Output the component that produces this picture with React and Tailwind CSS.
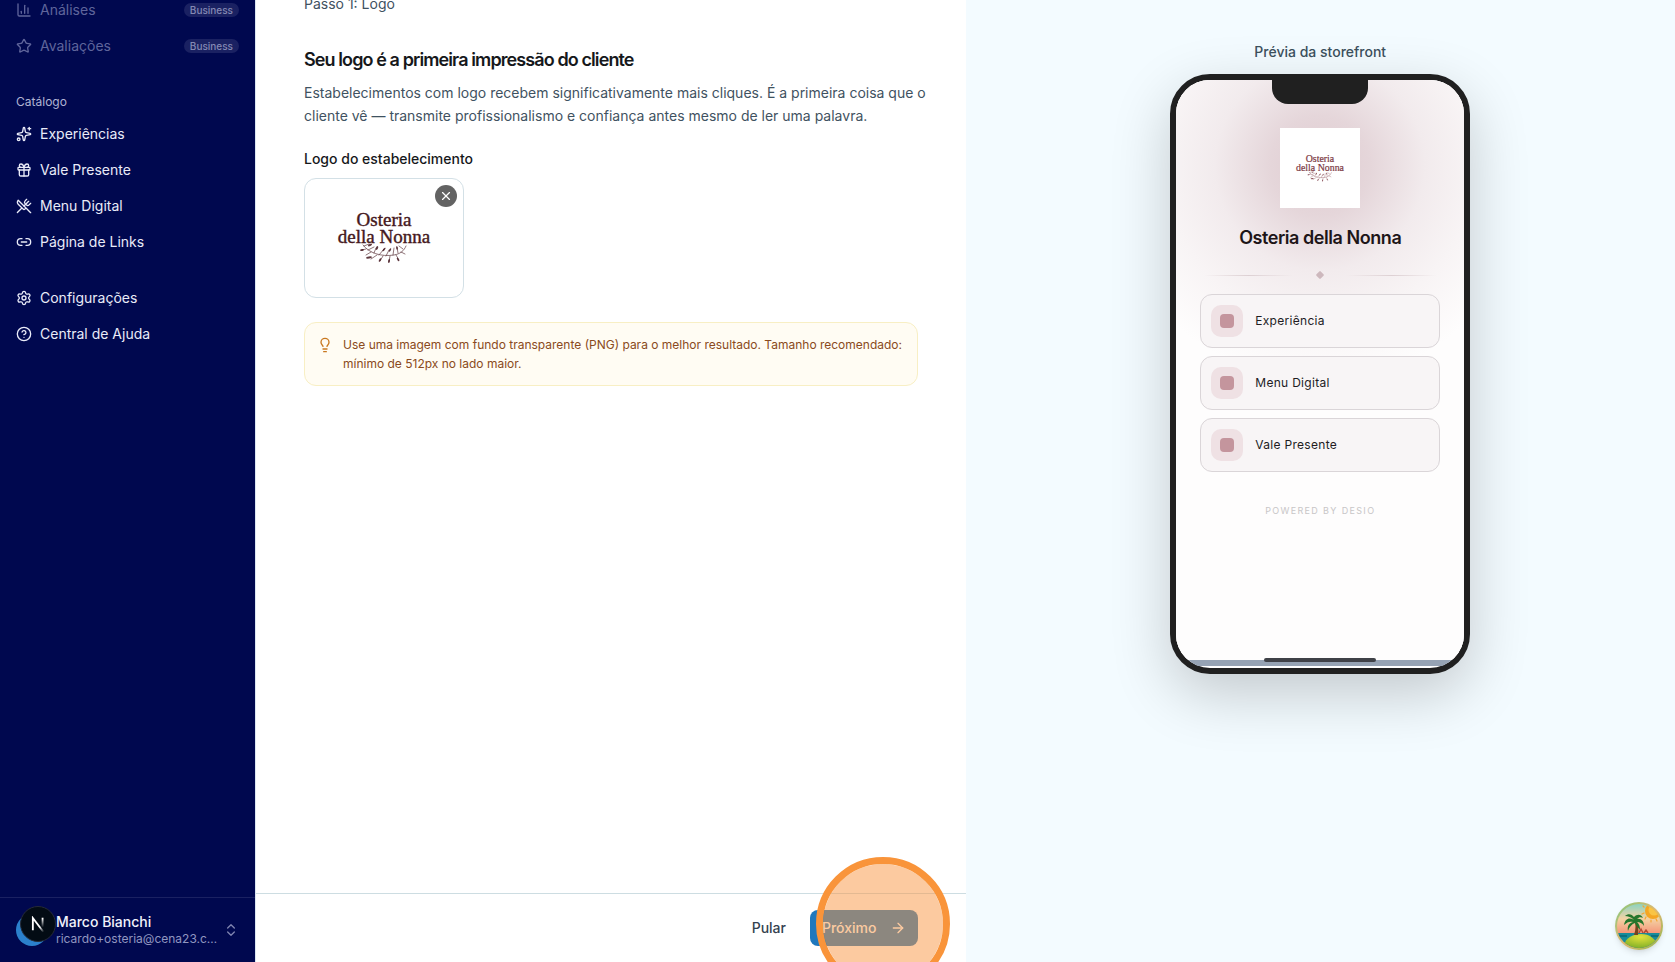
import React from "react";
import {
  ChartColumn,
  Star,
  Sparkles,
  Gift,
  UtensilsCrossed,
  Link2,
  Settings,
  CircleHelp,
  ChevronsUpDown,
  Lightbulb,
  X,
  ArrowRight,
} from "lucide-react";

const businessItems = [
  { label: "Análises", icon: ChartColumn },
  { label: "Avaliações", icon: Star },
];

const catalogItems = [
  { label: "Experiências", icon: Sparkles },
  { label: "Vale Presente", icon: Gift },
  { label: "Menu Digital", icon: UtensilsCrossed },
  { label: "Página de Links", icon: Link2 },
];

const supportItems = [
  { label: "Configurações", icon: Settings },
  { label: "Central de Ajuda", icon: CircleHelp },
];

const previewLinks = ["Experiência", "Menu Digital", "Vale Presente"];

function NavLink({ label, icon: Icon }) {
  return (
    <a href="#" className="flex h-8 items-center gap-2 px-2 text-sm text-[#e9ebf8]">
      <Icon className="size-4 shrink-0" />
      {label}
    </a>
  );
}

function BrandLogo({ className }) {
  return (
    <svg className={className} viewBox="0 0 96 52" role="img" aria-label="Osteria della Nonna">
      <g
        fill="currentColor"
        stroke="currentColor"
        strokeWidth="0.4"
        fontFamily="Liberation Serif, serif"
        fontSize="19"
        textAnchor="middle"
      >
        <text x="48" y="14">Osteria</text>
        <text x="48" y="31">della Nonna</text>
      </g>
      <g fill="none" stroke="currentColor" strokeWidth="0.7" strokeLinecap="round" opacity="0.85">
        <path d="M27 33c6 8 18 12 31 10 6-1 10-4 12-9" />
        <path d="M28 34l5-2M30 37l-4 1M32 38l6-3M35 40l-5 3M38 41l2-5M41 43l-6 4M43 43l5-6M47 44l-3 5M50 44l3-6M54 44l-1 6M57 43l1-7M60 43l3 5M62 41l-1-6M65 40l4 2M67 37l-4-3" />
      </g>
      <g fill="currentColor" opacity="0.85">
        <ellipse cx="34" cy="33" rx="2.2" ry="1" transform="rotate(-25 34 33)" />
        <ellipse cx="26" cy="38" rx="2" ry="0.9" transform="rotate(-10 26 38)" />
        <ellipse cx="33" cy="45.5" rx="3" ry="1.1" transform="rotate(-8 33 45.5)" />
        <ellipse cx="41" cy="36" rx="2" ry="1" transform="rotate(-65 41 36)" />
        <ellipse cx="48" cy="37.5" rx="2.2" ry="0.9" transform="rotate(-50 48 37.5)" />
        <ellipse cx="44" cy="48" rx="2" ry="0.9" transform="rotate(-60 44 48)" />
        <ellipse cx="54" cy="38" rx="2" ry="0.8" transform="rotate(-60 54 38)" />
        <ellipse cx="53" cy="49" rx="2" ry="0.9" transform="rotate(-80 53 49)" />
        <ellipse cx="61" cy="36" rx="1.8" ry="0.8" transform="rotate(80 61 36)" />
        <ellipse cx="62" cy="47.5" rx="2" ry="0.8" transform="rotate(60 62 47.5)" />
      </g>
    </svg>
  );
}

function Sidebar() {
  return (
    <aside className="flex w-64 shrink-0 flex-col border-r border-[#dbe6f2] bg-[#00084f]">
      <nav className="-mt-1.5 flex-1 px-2" aria-label="Principal">
        <div className="flex flex-col gap-1">
          {businessItems.map(({ label, icon: Icon }) => (
            <a
              key={label}
              href="#"
              aria-disabled="true"
              className="flex h-8 items-center gap-2 px-2 text-sm text-[#5f659b]"
            >
              <Icon className="size-4 shrink-0" />
              <span className="flex-1">{label}</span>
              <span className="rounded-full bg-[#1a2162] px-1.5 text-[10px] leading-[14px] font-medium text-[#8489b4]">
                Business
              </span>
            </a>
          ))}
        </div>
        <h2 className="mt-6 flex h-8 items-center px-2 text-xs text-[#b0b4d3]">Catálogo</h2>
        <div className="flex flex-col gap-1">
          {catalogItems.map((item) => (
            <NavLink key={item.label} {...item} />
          ))}
        </div>
        <div className="mt-6 flex flex-col gap-1">
          {supportItems.map((item) => (
            <NavLink key={item.label} {...item} />
          ))}
        </div>
      </nav>
      <div className="border-t border-[#1a2162] p-2">
        <button type="button" className="flex h-12 w-full items-center px-2 text-left">
          <span className="mr-2 size-8 shrink-0 rounded-full bg-[#2b80cc]" />
          <span className="min-w-0 flex-1">
            <span className="block truncate text-sm leading-[18px] font-medium text-[#f1f3fb]">Marco Bianchi</span>
            <span className="block truncate text-xs text-[#9196c0]">ricardo+osteria@cena23.com.br</span>
          </span>
          <ChevronsUpDown className="size-4 shrink-0 text-[#7f84b0]" />
        </button>
      </div>
    </aside>
  );
}

function Editor() {
  return (
    <main className="flex min-w-0 flex-1 flex-col bg-white">
      <div className="-mt-1.5 flex-1 px-12">
        <p className="text-sm text-[#3f5261]">Passo 1: Logo</p>
        <h1 className="mt-8 text-lg font-semibold tracking-tighter text-[#16181b]">
          Seu logo é a primeira impressão do cliente
        </h1>
        <p className="-mr-3 mt-[7px] text-sm leading-[23px] text-[#3f5261]">
          Estabelecimentos com logo recebem significativamente mais cliques. É a primeira coisa que o{" "}
          <br />
          cliente vê — transmite profissionalismo e confiança antes mesmo de ler uma palavra.
        </p>
        <h2 className="mt-[25px] text-sm leading-[14px] font-medium text-[#16181b]">Logo do estabelecimento</h2>
        <div className="relative mt-3 flex h-30 w-40 items-center justify-center rounded-xl border border-[#d3e0e6] bg-white">
          <BrandLogo className="h-[52px] w-24 text-[#451820]" />
          <button
            type="button"
            aria-label="Remover logo"
            className="absolute top-1.5 right-1.5 flex size-[22px] items-center justify-center rounded-full bg-[#636363] text-white"
          >
            <X className="size-3.5" />
          </button>
        </div>
        <div className="mt-6 flex gap-2.5 rounded-xl border border-[#f8efc4] bg-[#fffcf3] p-3 text-[#8a4a20]">
          <Lightbulb className="mt-0.5 size-4 shrink-0 text-[#c9781f]" />
          <p className="text-xs leading-[19px]">
            Use uma imagem com fundo transparente (PNG) para o melhor resultado. Tamanho recomendado: mínimo de 512px
            no lado maior.
          </p>
        </div>
      </div>
      <footer className="flex items-center justify-end gap-3 border-t border-[#cddde2] px-12 py-4">
        <button type="button" className="h-9 px-3 text-sm font-medium text-[#34424f]">
          Pular
        </button>
        <div className="relative">
          <button
            type="button"
            className="flex h-9 items-center gap-[13px] rounded-lg bg-[#1f78bd] px-3 text-sm font-medium text-white"
          >
            Próximo
            <ArrowRight className="size-4" />
          </button>
          <span className="pointer-events-none absolute -top-[53px] left-1.5 z-10 size-[134px] rounded-full border-[7px] border-[#f9943a] bg-[#f99541]/50 bg-clip-padding" />
        </div>
      </footer>
    </main>
  );
}

function PhonePreview() {
  return (
    <div className="relative h-[600px] w-[300px] overflow-hidden rounded-[40px] border-[6px] border-[#202020] bg-white shadow-[0_20px_60px_rgba(0,0,0,0.2)]">
      <div className="h-[580px] bg-[#fefdfd] bg-[radial-gradient(circle_at_50%_86px,#dfcbd0_0px,#e5d6da_50px,#f2ebed_105px,#f8f4f5_155px,#fefdfd_215px)] px-6 pt-12">
        <div className="mx-auto flex size-20 items-center justify-center bg-white">
          <BrandLogo className="h-[27px] w-[50px] text-[#7c3a44]" />
        </div>
        <h2 className="mt-4 text-center text-lg font-semibold tracking-tight text-[#1d1518]">Osteria della Nonna</h2>
        <div className="mt-[19px] flex h-2 items-center gap-6 px-1">
          <span className="h-px flex-1 bg-linear-to-r from-transparent via-[#ddd0d3] to-transparent" />
          <span className="size-1.5 rotate-45 rounded-[1px] bg-[#cdb8bd]" />
          <span className="h-px flex-1 bg-linear-to-r from-transparent via-[#ddd0d3] to-transparent" />
        </div>
        <div className="mt-[15px] flex flex-col gap-2">
          {previewLinks.map((label) => (
            <a
              key={label}
              href="#"
              className="flex h-[54px] items-center gap-3 rounded-xl border border-[#dad5d8] bg-[#f8f5f6] px-2.5 text-xs tracking-wide text-[#221c1f]"
            >
              <span className="flex size-8 items-center justify-center rounded-[10px] bg-[#efe1e4]">
                <span className="size-3.5 rounded bg-[#c4959d]" />
              </span>
              {label}
            </a>
          ))}
        </div>
        <p className="mt-8 text-center text-[9px] leading-[14px] tracking-[0.15em] text-[#c8c6c7]">POWERED BY DESIO</p>
      </div>
      <div className="h-1.5 bg-[#96a3b4]" />
      <span className="absolute top-0 left-1/2 h-6 w-24 -translate-x-1/2 rounded-b-2xl bg-[#202020]" />
      <span className="absolute bottom-1.5 left-1/2 h-1 w-28 -translate-x-1/2 rounded-full bg-[#3f4147]" />
    </div>
  );
}

function PalmBadge() {
  return (
    <button type="button" aria-label="Ferramentas" className="fixed right-3 bottom-3 size-12 rounded-full shadow-md">
      <svg viewBox="0 0 48 48" className="size-12" aria-hidden="true">
        <defs>
          <linearGradient id="palm-sky" x1="0" y1="0" x2="0" y2="1">
            <stop offset="0" stopColor="#7fd3c4" />
            <stop offset="0.35" stopColor="#f3d3a4" />
            <stop offset="0.7" stopColor="#f58c72" />
          </linearGradient>
          <linearGradient id="palm-rim" x1="0" y1="0" x2="1" y2="1">
            <stop offset="0" stopColor="#7fc97c" />
            <stop offset="0.5" stopColor="#e0b873" />
            <stop offset="1" stopColor="#8fb64c" />
          </linearGradient>
          <radialGradient id="palm-sand" cx="0.5" cy="0.2" r="0.9">
            <stop offset="0" stopColor="#e2e33a" />
            <stop offset="1" stopColor="#6ea524" />
          </radialGradient>
          <clipPath id="palm-clip">
            <circle cx="24" cy="24" r="22" />
          </clipPath>
        </defs>
        <circle cx="24" cy="24" r="24" fill="url(#palm-rim)" />
        <g clipPath="url(#palm-clip)">
          <rect width="48" height="48" fill="url(#palm-sky)" />
          <g stroke="#f6a531" strokeWidth="1.2" strokeLinecap="round">
            <path d="M29 5l-1-1M29 11l-2 1M31 15l-1 2M36 18v2M41 17l1 2" />
          </g>
          <circle cx="38" cy="9" r="8" fill="#f5a623" />
          <circle cx="39" cy="8" r="5.5" fill="#f9c445" />
          <path d="M0 31h48v17H0z" fill="#178c9a" />
          <path d="M2 34h10M36 34h10" stroke="#0c6677" strokeWidth="1.5" />
          <path d="M9 43c2-7 8-11 17-11s14 5 16 10c-4 6-28 7-33 1z" fill="url(#palm-sand)" />
          <path d="M24 31l2-4 2 4M29 31l2-3 2 3" stroke="#b54b35" strokeWidth="1.4" fill="none" />
          <path d="M19 17c2 5 2 10 0 16h4c1-6 0-11-2-16z" fill="#78441e" />
          <path
            d="M19 18c-5-3-9-1-10 5 3-3 6-4 9-3-4 1-6 4-5 9 1-4 4-7 7-8 1 2 3 5 5 7 0-4-1-6-3-8 3 0 5 1 7 4 0-5-3-8-7-7 2-2 4-2 6-1-2-4-6-4-9-1-2-3-6-4-9-1 3 0 6 1 9 4z"
            fill="#25762c"
          />
        </g>
      </svg>
    </button>
  );
}

function DevBadge() {
  return (
    <button
      type="button"
      aria-label="Ferramentas de desenvolvimento"
      className="fixed bottom-5 left-5 flex size-9 items-center justify-center rounded-full border border-[#252b38] bg-[#030c14]"
    >
      <svg viewBox="0 0 14 14" className="size-4" fill="none" aria-hidden="true">
        <defs>
          <linearGradient id="dev-a" x1="5" y1="5" x2="12" y2="14" gradientUnits="userSpaceOnUse">
            <stop offset="0.5" stopColor="#fff" />
            <stop offset="1" stopColor="#fff" stopOpacity="0" />
          </linearGradient>
          <linearGradient id="dev-b" x1="11" y1="2" x2="11" y2="10" gradientUnits="userSpaceOnUse">
            <stop stopColor="#fff" />
            <stop offset="1" stopColor="#fff" stopOpacity="0" />
          </linearGradient>
        </defs>
        <path d="M2.5 12.5V1.8l9.3 12.2" stroke="url(#dev-a)" strokeWidth="1.6" />
        <path d="M11 1.5v8.5" stroke="url(#dev-b)" strokeWidth="1.6" />
      </svg>
    </button>
  );
}

export default function App() {
  return (
    <div className="flex h-screen overflow-hidden bg-[#f3fbff] font-['Inter',sans-serif]">
      <Sidebar />
      <Editor />
      <section className="flex min-w-0 flex-1 flex-col items-center pt-[42px]" aria-label="Prévia">
        <p className="mb-3 text-sm font-medium text-[#3c505d]">Prévia da storefront</p>
        <PhonePreview />
      </section>
      <DevBadge />
      <PalmBadge />
    </div>
  );
}
